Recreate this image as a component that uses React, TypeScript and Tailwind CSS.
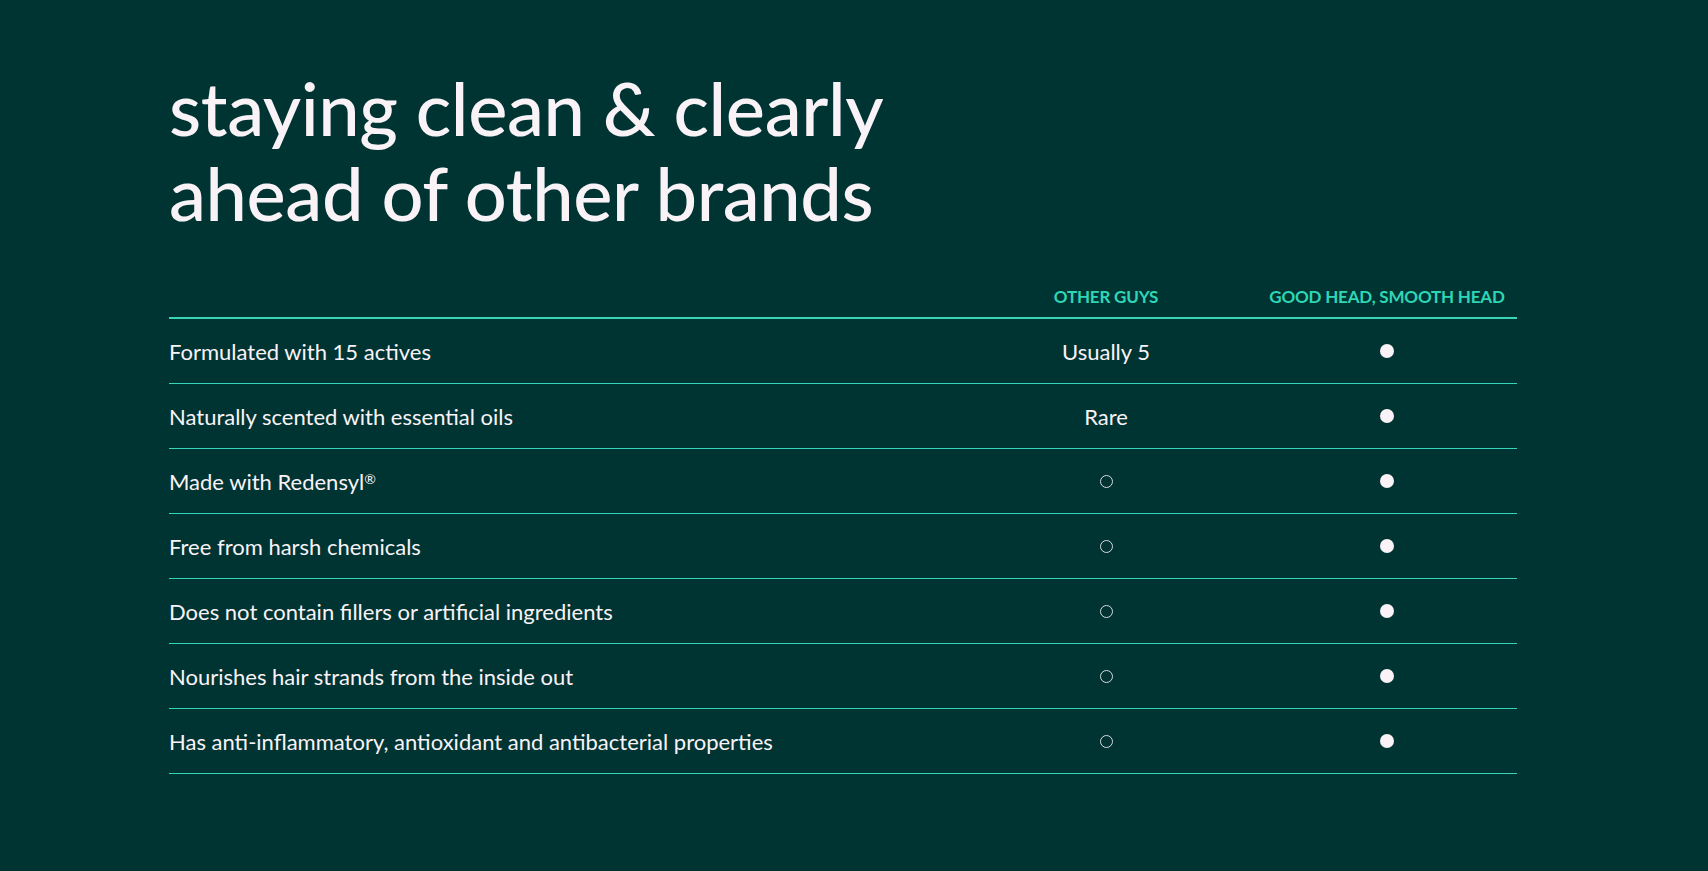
import React from "react";

type Cell = { kind: "text"; value: string } | { kind: "open" } | { kind: "filled" };

const rows: { label: React.ReactNode; key: string; other: Cell }[] = [
  { key: "a", label: "Formulated with 15 actives", other: { kind: "text", value: "Usually 5" } },
  { key: "b", label: "Naturally scented with essential oils", other: { kind: "text", value: "Rare" } },
  {
    key: "c",
    label: (
      <>
        Made with Redensyl
        <span className="text-[14px] relative -top-[6px]">®</span>
      </>
    ),
    other: { kind: "open" },
  },
  { key: "d", label: "Free from harsh chemicals", other: { kind: "open" } },
  { key: "e", label: "Does not contain fillers or artificial ingredients", other: { kind: "open" } },
  { key: "f", label: "Nourishes hair strands from the inside out", other: { kind: "open" } },
  { key: "g", label: "Has anti-inflammatory, antioxidant and antibacterial properties", other: { kind: "open" } },
];

function OpenDot() {
  return <span className="block w-[13px] h-[13px] rounded-full border border-[#dcd8dc]" />;
}
function FilledDot() {
  return <span className="block w-[14px] h-[14px] rounded-full bg-[#f9f3f7]" />;
}

function renderCell(c: Cell) {
  if (c.kind === "text") return <span>{c.value}</span>;
  if (c.kind === "open") return <OpenDot />;
  return <FilledDot />;
}

export default function App() {
  return (
    <div
      className="w-full min-h-[871px] bg-[#003433] text-[#f9f3f7]"
      style={{ fontFamily: "Lato, 'Liberation Sans', sans-serif" }}
    >
      <div className="pl-[169px] pt-[65px]">
        <h1 className="text-[74px] leading-[85px] font-medium tracking-[-0.4px] text-[#f9f3f7]">
          staying clean &amp; clearly
          <br />
          ahead of other brands
        </h1>

        <div className="w-[1348px] mt-[50px]">
          <div className="grid grid-cols-[1fr_302px_260px] border-b-2 border-[#35d6b8] pb-[8px] text-[17px] leading-[24px] font-bold tracking-[-0.2px] text-[#2fd6b6]">
            <div />
            <div className="text-center">OTHER GUYS</div>
            <div className="text-center">GOOD HEAD, SMOOTH HEAD</div>
          </div>
          {rows.map((r) => (
            <div
              key={r.key}
              className="grid grid-cols-[1fr_302px_260px] h-[65px] border-b border-[#35d6b8] text-[22px]"
            >
              <div className="flex items-center">
                <span>{r.label}</span>
              </div>
              <div className="flex items-center justify-center">{renderCell(r.other)}</div>
              <div className="flex items-center justify-center">
                <FilledDot />
              </div>
            </div>
          ))}
        </div>
      </div>
    </div>
  );
}
